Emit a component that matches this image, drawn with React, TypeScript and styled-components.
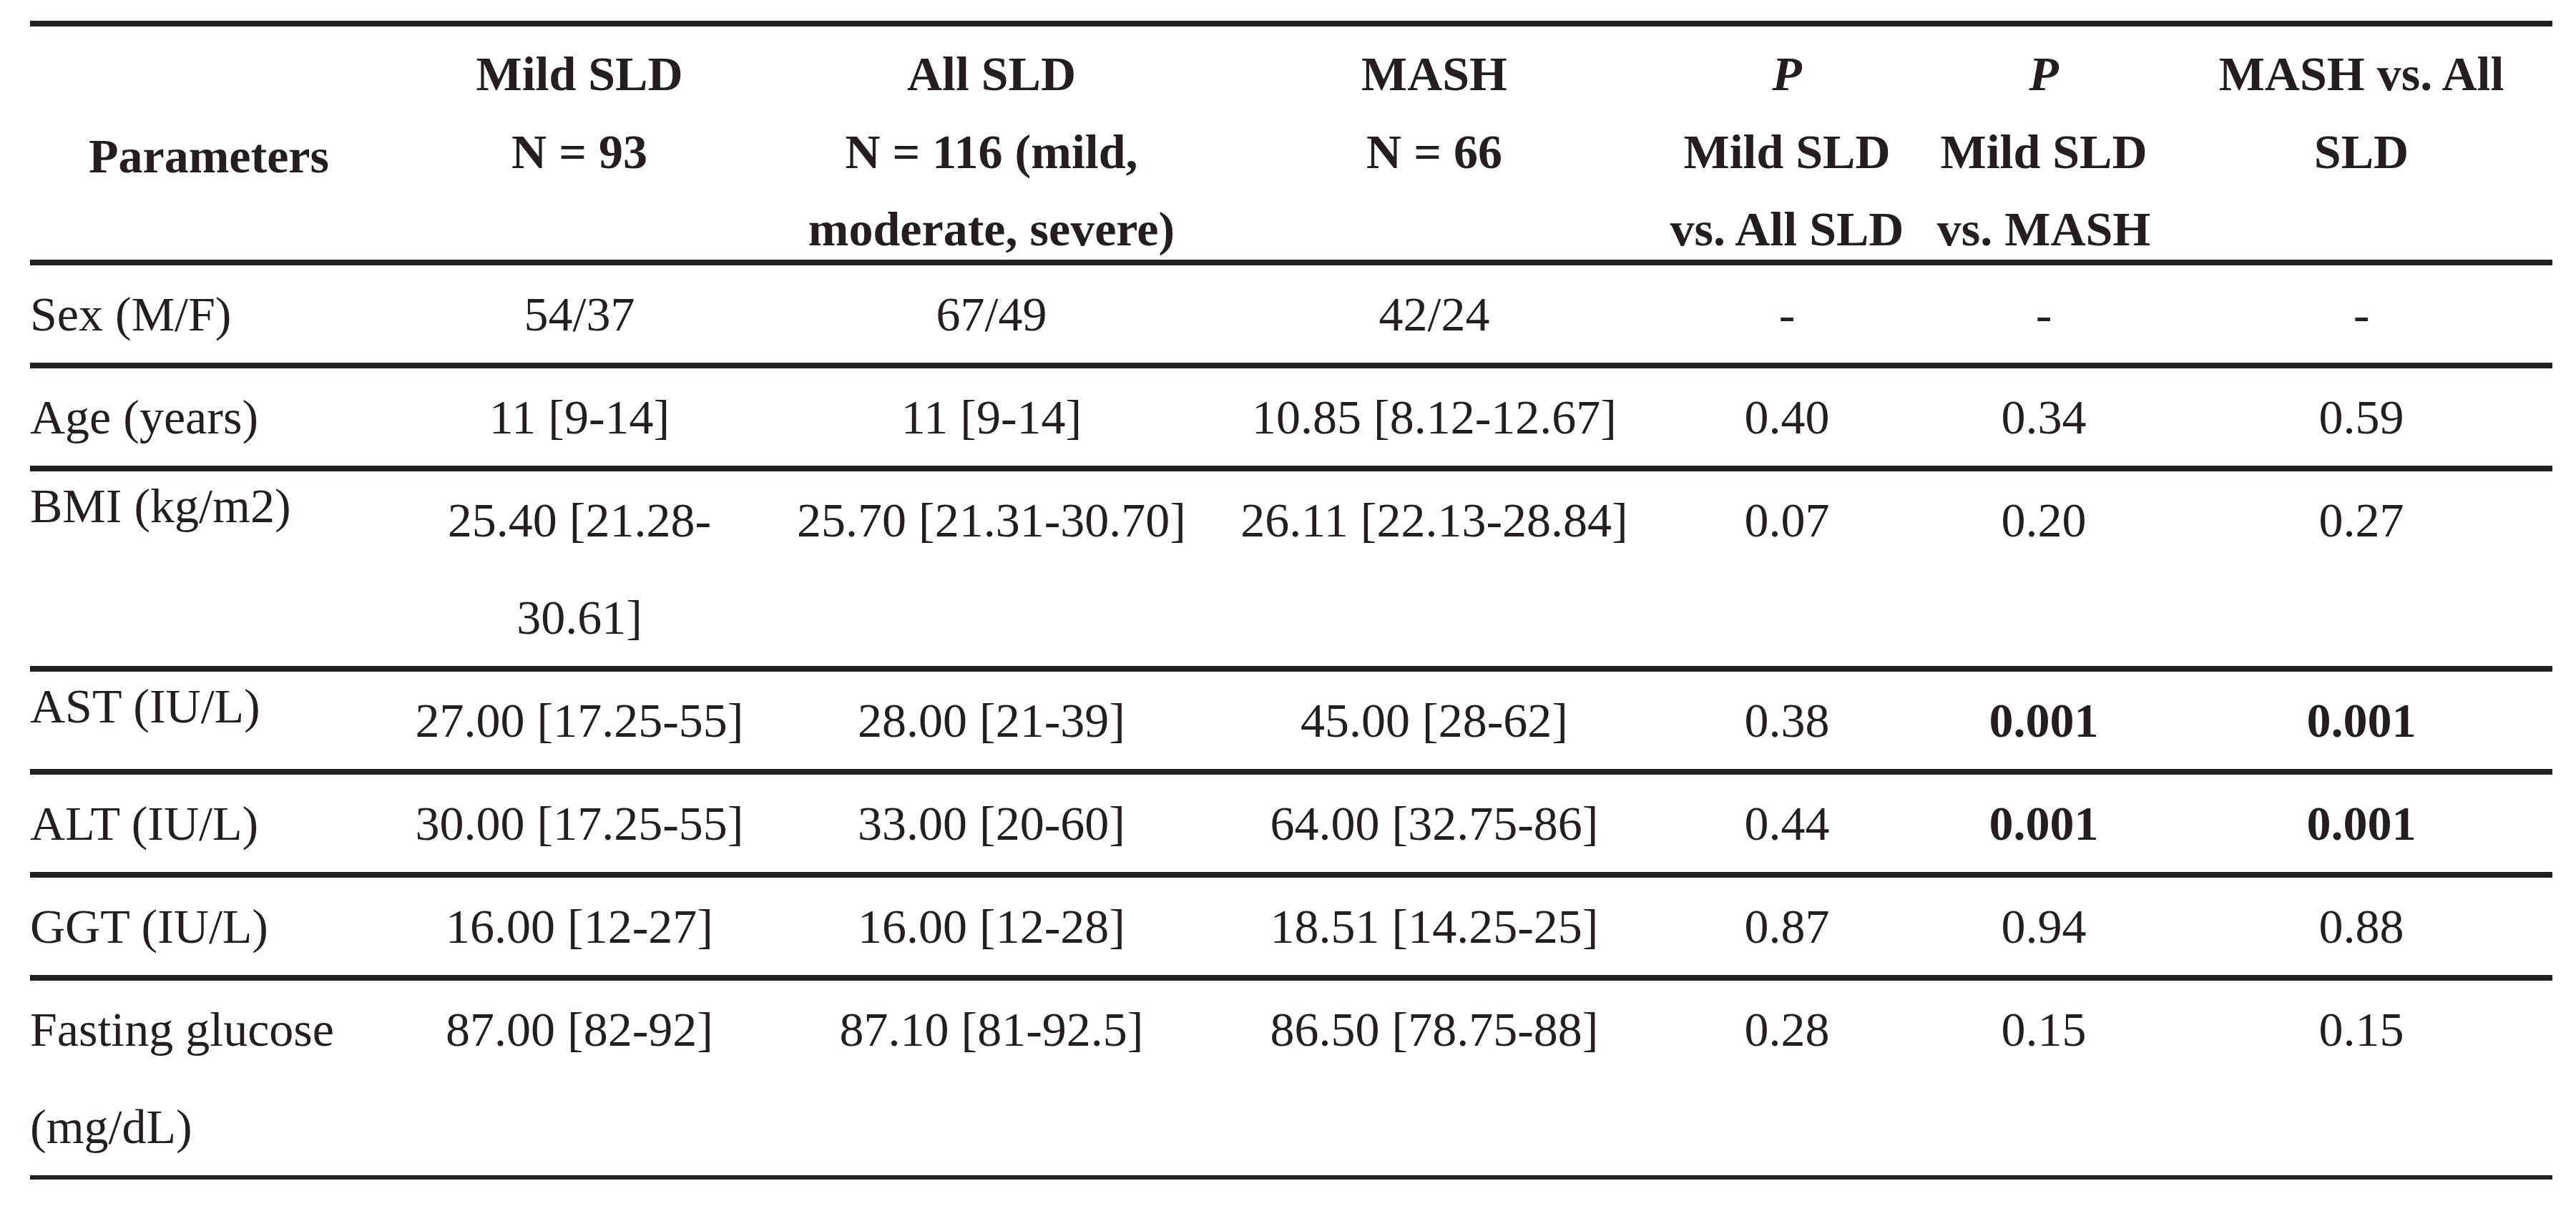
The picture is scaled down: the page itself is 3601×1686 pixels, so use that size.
import styled, { createGlobalStyle } from 'styled-components';

const GlobalStyle = createGlobalStyle`
    html, body {
        margin: 0;
        padding: 0;
        background: #ffffff;
    }
    body {
        font-family: 'Liberation Serif', 'Times New Roman', serif;
        color: #231f20;
    }
`;

const COLUMNS = '500px 536px 616px 622px 364px 354px 534px';

const Table = styled.div`
    width: 3526px;
    margin: 29px 0 0 42px;
    border-top: 8px solid #231f20;
    font-size: 68px;
`;

const HeaderRow = styled.div`
    display: grid;
    grid-template-columns: ${COLUMNS};
    box-sizing: border-box;
    height: 334px;
    padding-top: 12px;
    border-bottom: 8px solid #231f20;
`;

const HeadCell = styled.div<{ $middle?: boolean }>`
    align-self: ${(p) => (p.$middle ? 'center' : 'start')};
    padding-top: ${(p) => (p.$middle ? '12px' : '0')};
    text-align: center;
    font-weight: bold;
    line-height: 108.5px;
    white-space: nowrap;
`;

const Italic = styled.i`
    font-style: italic;
`;

const BodyRow = styled.div<{ $last?: boolean }>`
    display: grid;
    grid-template-columns: ${COLUMNS};
    border-bottom: ${(p) => (p.$last ? '6px' : '8px')} solid #231f20;
`;

const Label = styled.div<{ $lifted?: boolean }>`
    text-align: left;
    line-height: ${(p) => (p.$lifted ? '96px' : '136px')};
`;

const Value = styled.div<{ $bold?: boolean }>`
    text-align: center;
    line-height: 136px;
    font-weight: ${(p) => (p.$bold ? 'bold' : 'normal')};
    white-space: nowrap;
`;

type Cell = { lines: string[]; bold?: boolean };
type Row = { label: string; lifted?: boolean; cells: Cell[] };

const c = (...lines: string[]): Cell => ({ lines });
const b = (...lines: string[]): Cell => ({ lines, bold: true });

const headers: { lines: React.ReactNode[]; middle?: boolean }[] = [
    { lines: ['Parameters'], middle: true },
    { lines: ['Mild SLD', 'N = 93'] },
    { lines: ['All SLD', 'N = 116 (mild,', 'moderate, severe)'] },
    { lines: ['MASH', 'N = 66'] },
    { lines: [<Italic key="p">P</Italic>, 'Mild SLD', 'vs. All SLD'] },
    { lines: [<Italic key="p">P</Italic>, 'Mild SLD', 'vs. MASH'] },
    { lines: ['MASH vs. All', 'SLD'] },
];

const rows: Row[] = [
    { label: 'Sex (M/F)', cells: [c('54/37'), c('67/49'), c('42/24'), c('-'), c('-'), c('-')] },
    { label: 'Age (years)', cells: [c('11 [9-14]'), c('11 [9-14]'), c('10.85 [8.12-12.67]'), c('0.40'), c('0.34'), c('0.59')] },
    {
        label: 'BMI (kg/m2)',
        lifted: true,
        cells: [c('25.40 [21.28-', '30.61]'), c('25.70 [21.31-30.70]'), c('26.11 [22.13-28.84]'), c('0.07'), c('0.20'), c('0.27')],
    },
    {
        label: 'AST (IU/L)',
        lifted: true,
        cells: [c('27.00 [17.25-55]'), c('28.00 [21-39]'), c('45.00 [28-62]'), c('0.38'), b('0.001'), b('0.001')],
    },
    { label: 'ALT (IU/L)', cells: [c('30.00 [17.25-55]'), c('33.00 [20-60]'), c('64.00 [32.75-86]'), c('0.44'), b('0.001'), b('0.001')] },
    { label: 'GGT (IU/L)', cells: [c('16.00 [12-27]'), c('16.00 [12-28]'), c('18.51 [14.25-25]'), c('0.87'), c('0.94'), c('0.88')] },
    {
        label: 'Fasting glucose (mg/dL)',
        cells: [c('87.00 [82-92]'), c('87.10 [81-92.5]'), c('86.50 [78.75-88]'), c('0.28'), c('0.15'), c('0.15')],
    },
];

const Lines = ({ lines }: { lines: React.ReactNode[] }) => (
    <>
        {lines.map((line, i) => (
            <div key={i}>{line}</div>
        ))}
    </>
);

const App = () => {
    return (
        <>
            <GlobalStyle />
            <Table>
                <HeaderRow>
                    {headers.map((h, i) => (
                        <HeadCell key={i} $middle={h.middle}>
                            <Lines lines={h.lines} />
                        </HeadCell>
                    ))}
                </HeaderRow>
                {rows.map((row, r) => (
                    <BodyRow key={row.label} $last={r === rows.length - 1}>
                        <Label $lifted={row.lifted}>{row.label}</Label>
                        {row.cells.map((cell, i) => (
                            <Value key={i} $bold={cell.bold}>
                                <Lines lines={cell.lines} />
                            </Value>
                        ))}
                    </BodyRow>
                ))}
            </Table>
        </>
    );
};

export default App;
